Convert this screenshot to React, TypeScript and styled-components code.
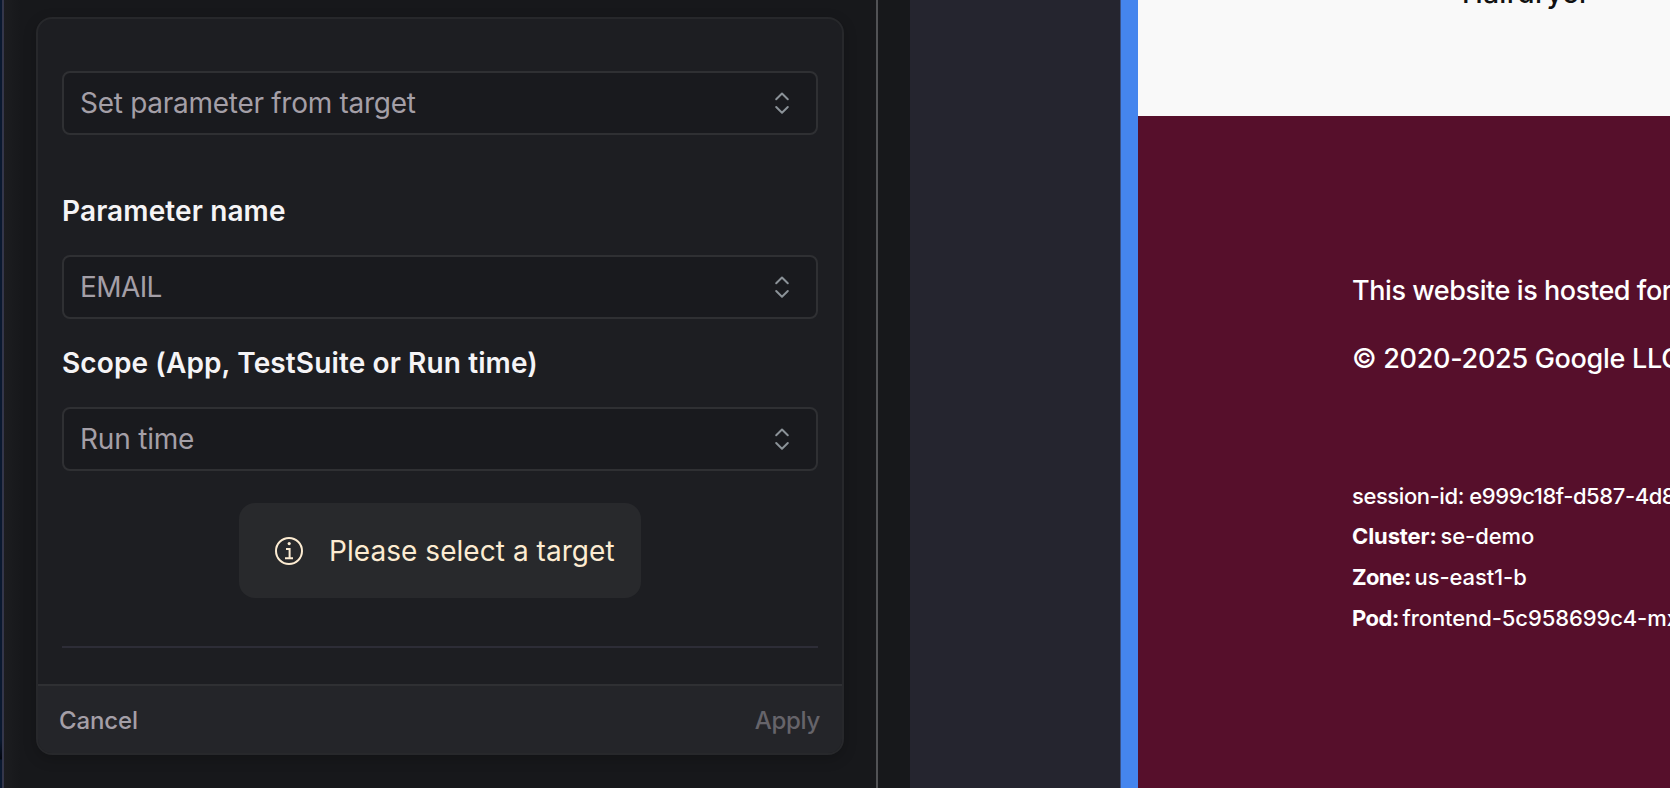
import React from 'react';
import styled, { createGlobalStyle } from 'styled-components';

const GlobalStyle = createGlobalStyle`
  * { box-sizing: border-box; }
  body { margin: 0; overflow: hidden; font-family: Inter, "Liberation Sans", sans-serif; background: #17181b; }
`;

const Page = styled.div`
  display: flex;
  width: 1670px;
  height: 788px;
  overflow: hidden;
`;

const EdgeStrip = styled.div`
  flex: none;
  width: 4px;
  border-right: 2px solid #34364a;
  background: linear-gradient(#0a1930 0 740px, #02060f 759px, #0a1930 760px);
`;

const Panel = styled.section`
  flex: none;
  width: 872px;
  padding: 17px 0 0 32px;
  background: linear-gradient(90deg, #1c1d20, #17181b 16px);
`;

const PanelGutter = styled.div`
  flex: none;
  width: 34px;
  border-left: 2px solid #515255;
  background: #17181b;
`;

const Backdrop = styled.div`
  flex: none;
  width: 211px;
  background: #25252f;
  border-right: 1px solid #3a5288;
`;

const AccentBar = styled.div`
  flex: none;
  width: 17px;
  background: #4585ee;
`;

const Card = styled.div`
  width: 808px;
  height: 738px;
  border: 2px solid #27282b;
  border-radius: 16px;
  background: #1d1e22;
  box-shadow: 0 4px 14px rgba(0, 0, 0, 0.2);
  overflow: hidden;
`;

const CardBody = styled.div`
  display: flex;
  flex-direction: column;
  height: 665px;
  padding: 52px 24px 0;
`;

const Select = styled.button`
  display: flex;
  flex: none;
  align-items: center;
  justify-content: space-between;
  width: 756px;
  height: 64px;
  padding: 0 24px 0 16px;
  border: 2px solid #2f3033;
  border-radius: 8px;
  background: #191a1e;
  color: #a49fa7;
  text-align: left;
`;

const Value = styled.span<{ $tracking: number }>`
  font: 400 28px/34px Inter, sans-serif;
  letter-spacing: ${(p) => p.$tracking}px;
  white-space: nowrap;
`;

const Label = styled.label<{ $top: number }>`
  flex: none;
  margin: ${(p) => p.$top}px 0 27px;
  font: 600 28px/34px Inter, sans-serif;
  letter-spacing: 0.12px;
  color: #f5f4f6;
  white-space: nowrap;
`;

const Notice = styled.div`
  display: flex;
  flex: none;
  align-items: center;
  align-self: center;
  width: 402px;
  height: 95px;
  margin: 32px 0 48px;
  padding: 1px 0 0 36px;
  gap: 26px;
  border-radius: 16px;
  background: #28292c;
  color: #fdecd2;
`;

const Divider = styled.hr`
  flex: none;
  width: 756px;
  height: 2px;
  margin: 0;
  border: 0;
  background: #2d2d37;
`;

const CardFooter = styled.footer`
  display: flex;
  align-items: center;
  justify-content: space-between;
  height: 69px;
  padding: 2px 22px 0 21px;
  border-top: 2px solid #2f3033;
  background: #242529;
`;

const TextButton = styled.button<{ $muted?: boolean }>`
  padding: 0;
  border: 0;
  background: none;
  font: 500 24px/29px Inter, sans-serif;
  letter-spacing: ${(p) => (p.$muted ? -0.3 : -0.1)}px;
  color: ${(p) => (p.$muted ? '#66646a' : '#a49fa7')};
`;

const Site = styled.main`
  flex: 1;
  min-width: 0;
  overflow: hidden;
  white-space: nowrap;
`;

const Products = styled.section`
  height: 116px;
  background: #f9f9f9;
  overflow: hidden;
`;

const ProductName = styled.h3`
  margin: -24px 0 0 324px;
  font: 500 28px/34px Inter, sans-serif;
  letter-spacing: 0.3px;
  color: #111;
`;

const SiteFooter = styled.footer`
  height: 672px;
  padding: 158px 0 0 214px;
  background: #560f2b;
  color: #fff;
`;

const Legal = styled.p<{ $tracking: number }>`
  margin: 0 0 34px;
  font: 500 27px/34px Inter, sans-serif;
  letter-spacing: ${(p) => p.$tracking}px;
`;

const Details = styled.div`
  margin-top: 100px;
  font: 450 22px/41px Inter, sans-serif;
`;

const DetailLine = styled.div<{ $tracking?: number }>`
  height: ${(p) => (p.$tracking ? 40 : 41)}px;
  letter-spacing: ${(p) => p.$tracking ?? -0.1}px;
`;

const Key = styled.strong<{ $tracking: number }>`
  margin-right: -2px;
  font-weight: 700;
  letter-spacing: ${(p) => p.$tracking}px;
`;

const Icon = styled.svg`
  flex: none;
  fill: none;
  stroke: currentColor;
`;

const ChevronIcon = styled(Icon)`
  color: #8b9298;
  stroke-width: 2;
  stroke-linecap: round;
  stroke-linejoin: round;
`;

const Chevrons = () => (
  <ChevronIcon width="20" height="28" viewBox="0 0 20 28">
    <path d="M4.2 10.2 10 4.5l5.8 5.7M4.2 18l5.8 5.7 5.8-5.7" />
  </ChevronIcon>
);

const InfoIcon = () => (
  <Icon width="28" height="28" viewBox="0 0 28 28" strokeWidth="2">
    <circle cx="14" cy="14" r="13" />
    <path d="M11 12h3.6v9M10 21.2h8" />
    <circle cx="14.2" cy="6.6" r="1.6" fill="currentColor" stroke="none" />
  </Icon>
);

const Field = ({ value, tracking = 0 }: { value: string; tracking?: number }) => (
  <Select>
    <Value $tracking={tracking}>{value}</Value>
    <Chevrons />
  </Select>
);

export default function App() {
  return (
    <Page>
      <GlobalStyle />
      <EdgeStrip />
      <Panel>
        <Card>
          <CardBody>
            <Field value="Set parameter from target" tracking={-0.28} />
            <Label $top={59}>Parameter name</Label>
            <Field value="EMAIL" tracking={-0.6} />
            <Label $top={27}>Scope (App, TestSuite or Run time)</Label>
            <Field value="Run time" tracking={-0.2} />
            <Notice>
              <InfoIcon />
              <Value $tracking={0.05}>Please select a target</Value>
            </Notice>
            <Divider />
          </CardBody>
          <CardFooter>
            <TextButton>Cancel</TextButton>
            <TextButton $muted>Apply</TextButton>
          </CardFooter>
        </Card>
      </Panel>
      <PanelGutter />
      <Backdrop />
      <AccentBar />
      <Site>
        <Products>
          <ProductName>Hairdryer</ProductName>
        </Products>
        <SiteFooter>
          <Legal $tracking={-0.42}>This website is hosted for</Legal>
          <Legal $tracking={-0.3}>© 2020-2025 Google LLC</Legal>
          <Details>
            <DetailLine $tracking={-0.42}>session-id: e999c18f-d587-4d8</DetailLine>
            <DetailLine><Key $tracking={-0.1}>Cluster:</Key> se-demo</DetailLine>
            <DetailLine><Key $tracking={-0.7}>Zone:</Key> us-east1-b</DetailLine>
            <DetailLine><Key $tracking={-0.5}>Pod:</Key> frontend-5c958699c4-mx</DetailLine>
          </Details>
        </SiteFooter>
      </Site>
    </Page>
  );
}
